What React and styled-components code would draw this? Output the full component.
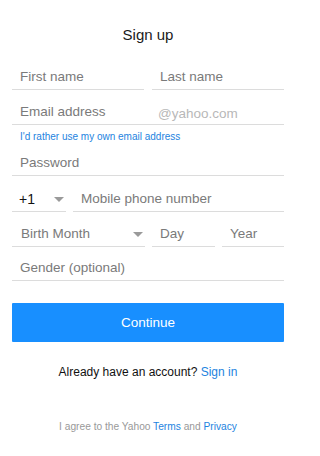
import React from 'react';
import styled, { createGlobalStyle } from 'styled-components';

const GlobalStyle = createGlobalStyle`
  html, body {
    margin: 0;
    padding: 0;
    background: #fff;
  }
  body {
    font-family: "Liberation Sans", Arial, sans-serif;
  }
`;

const Page = styled.div`
  width: 272px;
  margin-left: 12px;
  padding-top: 25px;
`;

const Title = styled.h1`
  margin: 0 0 10px 0;
  font-size: 15px;
  line-height: 20px;
  font-weight: 400;
  color: #1a1a1a;
  text-align: center;
`;

const Row = styled.div`
  display: grid;
  grid-template-columns: ${(p) => p.$cols || '1fr'};
  column-gap: ${(p) => p.$gap || 8}px;
`;

const Field = styled.div`
  position: relative;
  display: flex;
  align-items: flex-end;
  height: ${(p) => p.$h || 35}px;
  box-sizing: border-box;
  border-bottom: 1px solid #dcdcdc;
  padding: 0 ${(p) => p.$pr || 8}px 4px ${(p) => p.$pl || 8}px;
`;

const Placeholder = styled.span`
  flex: 1;
  font-size: ${(p) => (p.$dark ? 14 : 13.5)}px;
  line-height: 16px;
  color: ${(p) => (p.$dark ? '#111' : '#7a7a7a')};
  white-space: nowrap;
`;

const Suffix = styled.span`
  position: absolute;
  left: 146px;
  bottom: 2px;
  font-size: 13.5px;
  line-height: 16px;
  color: #b8b8b8;
`;

const Caret = styled.span`
  width: 0;
  height: 0;
  margin-bottom: 5px;
  border-left: 5px solid transparent;
  border-right: 5px solid transparent;
  border-top: 5px solid #9a9a9a;
`;

const OwnEmail = styled.a`
  display: block;
  margin: 6px 0 0 8px;
  font-size: 10px;
  line-height: 12px;
  color: #1d83e0;
  text-decoration: none;
`;

const Continue = styled.button`
  display: block;
  width: 100%;
  height: 39px;
  margin-top: 22px;
  border: none;
  border-radius: 1px;
  background: #188fff;
  color: #fff;
  font-family: "Liberation Sans", Arial, sans-serif;
  font-size: 13.5px;
  cursor: pointer;
`;

const SignIn = styled.p`
  margin: 22px 0 0 0;
  font-size: 12px;
  line-height: 16px;
  color: #111;
  text-align: center;
`;

const Footer = styled.p`
  margin: 41px 0 0 0;
  font-size: 10.2px;
  line-height: 12px;
  color: #999;
  text-align: center;
`;

const Link = styled.a`
  color: #1d83e0;
  text-decoration: none;
`;

export default function App() {
  return (
    <>
      <GlobalStyle />
      <Page>
        <Title>Sign up</Title>
        <Row $cols="1fr 1fr">
          <Field><Placeholder>First name</Placeholder></Field>
          <Field><Placeholder>Last name</Placeholder></Field>
        </Row>
        <Field>
          <Placeholder>Email address</Placeholder>
          <Suffix>@yahoo.com</Suffix>
        </Field>
        <OwnEmail href="#">I'd rather use my own email address</OwnEmail>
        <Field $h={33}><Placeholder>Password</Placeholder></Field>
        <Row $cols="54px 1fr" $gap={7}>
          <Field $h={36} $pr={2} $pl={7}>
            <Placeholder $dark>+1</Placeholder>
            <Caret />
          </Field>
          <Field $h={36}><Placeholder>Mobile phone number</Placeholder></Field>
        </Row>
        <Row $cols="133px 63px 62px" $gap={7}>
          <Field $pr={2} $pl={9}>
            <Placeholder>Birth Month</Placeholder>
            <Caret />
          </Field>
          <Field><Placeholder>Day</Placeholder></Field>
          <Field><Placeholder>Year</Placeholder></Field>
        </Row>
        <Field $h={34}><Placeholder>Gender (optional)</Placeholder></Field>
        <Continue>Continue</Continue>
        <SignIn>
          Already have an account? <Link href="#">Sign in</Link>
        </SignIn>
        <Footer>
          I agree to the Yahoo <Link href="#">Terms</Link> and <Link href="#">Privacy</Link>
        </Footer>
      </Page>
    </>
  );
}
